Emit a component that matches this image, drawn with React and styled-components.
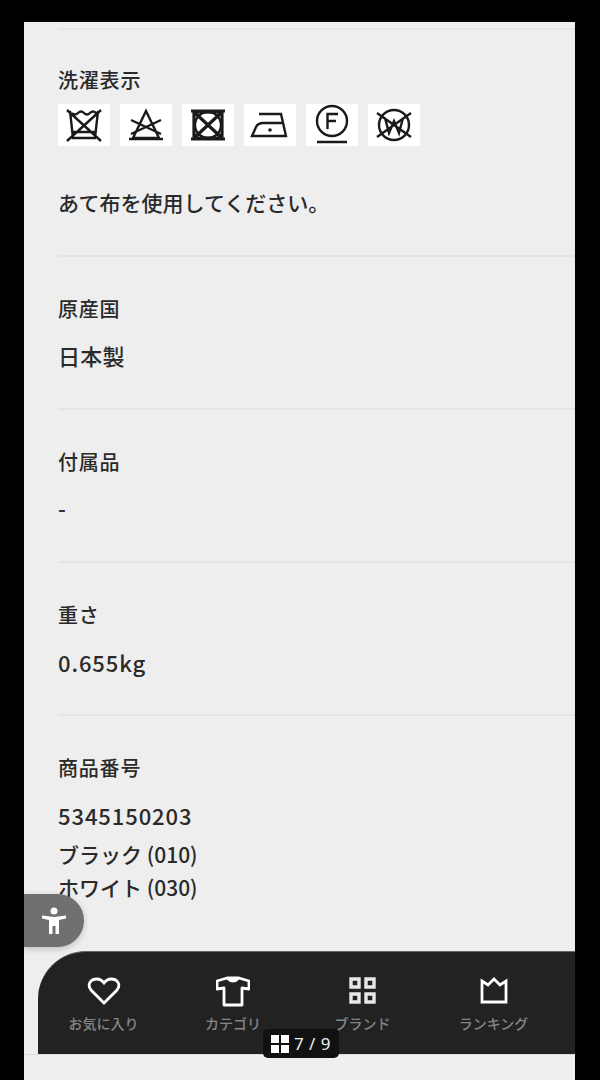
import React from "react";
import styled, { createGlobalStyle } from "styled-components";

const Global = createGlobalStyle`
  html, body { margin: 0; padding: 0; background: #000; }
  * { box-sizing: border-box; }
`;
const Screen = styled.div`
  position: relative; width: 600px; height: 1080px; background: #000; overflow: hidden;
  font-family: "Noto Sans CJK JP", "Noto Sans", sans-serif; color: #222;
`;
const TopBar = styled.div`height: 22px;`;
const Page = styled.main`
  margin: 0 25px 0 24px; height: 1058px; background: #eeeeee; padding: 6px 0 0 34px; overflow: hidden;
`;
const Section = styled.section`
  border-top: 2px solid #e4e4e4;
  padding-top: ${p => p.$top || 37}px;
  height: ${p => p.$h}px;
`;
const Label = styled.div`font-size: 20px; font-weight: 500; line-height: 30px; height: 30px; letter-spacing: .8px; color: #2a2a2a;`;
const Value = styled.div`
  font-size: ${p => p.$size || 22}px; font-weight: 500; line-height: ${p => p.$lh || 34}px;
  margin-top: ${p => p.$mt || 0}px; letter-spacing: ${p => p.$ls ?? 0.3}px; color: #2a2a2a;
`;
const Care = styled.div`display: flex; gap: 10px; margin-top: 9px;`;
const CareBox = styled.div`width: 52px; height: 42px; background: #fff; display: flex; align-items: center; justify-content: center;`;
const Note = styled.div`font-size: 21px; font-weight: 500; line-height: 34px; margin-top: 39px; color: #2a2a2a;`;
const Access = styled.div`
  position: absolute; left: 24px; top: 894px; width: 60px; height: 53px; background: #707070;
  border-radius: 0 27px 27px 0; display: flex; align-items: center; justify-content: center;
  box-shadow: 0 2px 6px rgba(0,0,0,.2);
`;
const Nav = styled.nav`
  position: absolute; left: 38px; top: 951px; width: 537px; height: 103px; background: #222;
  border-top-left-radius: 48px; display: grid; grid-template-columns: 131px 128px 131px 131px; border-top: 1px solid #666;
`;
const NavItem = styled.div`
  display: flex; flex-direction: column; align-items: center; padding-top: 23px; color: #858585; font-size: 14px; font-weight: 500; line-height: 20px;
  svg { height: 32px; margin-bottom: 6px; }
`;
const NavFooter = styled.div`
  position: absolute; left: 24px; top: 1054px; width: 551px; height: 26px; background: #efefef; border-top: 1px solid #ddd;
`;
const Pager = styled.div`
  position: absolute; left: 263px; top: 1029px; width: 76px; height: 29px; background: #111; border-radius: 5px; color: #eee;
  display: flex; align-items: center; justify-content: center; gap: 5px; font-family: "Noto Sans", sans-serif; font-size: 17px; letter-spacing: .5px;
`;

const S = { fill: "none", stroke: "#1a1a1a", strokeWidth: 2.4 };
const icons = [
  <svg width="40" height="36" viewBox="0 0 40 36" {...S}><path d="M6 4 9 31H31L34 4M3 3 37 34M37 3 3 34M8 6q3 3 6 0t6 0 6 0 6 0M9 25H31"/></svg>,
  <svg width="40" height="36" viewBox="0 0 40 36" {...S}><path d="M20 4 33 31H7ZM5 13 35 27M35 13 5 27M3 32H37"/></svg>,
  <svg width="40" height="36" viewBox="0 0 40 36" {...S}><path strokeWidth="3.200" d="M6 5H34V31H6ZM3 4H37M3 32H37M6 5 34 31M34 5 6 31"/><circle cx="20" cy="18" r="13"/></svg>,
  <svg width="40" height="36" viewBox="0 0 40 36" {...S}><path d="M9 7H31L36 29H2L6 20Q8 16 13 16H33"/><circle cx="20" cy="23" r="1.800" fill="#1a1a1a" stroke="none"/></svg>,
  <svg width="40" height="42" viewBox="0 0 40 42" {...S}><circle cx="20" cy="17" r="15"/><path d="M15.500 25V10H26M15.500 17H24M5 38H35"/></svg>,
  <svg width="40" height="36" viewBox="0 0 40 36" {...S}><circle cx="20" cy="18" r="15"/><path d="M3 6 37 30M37 6 3 30M11 11 15 26 20 14 25 26 29 11"/></svg>,
];
const W = { fill: "none", stroke: "#fff", strokeWidth: 2.8 };

export default function App() {
  return (
    <Screen>
      <Global />
      <TopBar />
      <Page>
        <Section $top={35} $h={227}>
          <Label>洗濯表示</Label>
          <Care>{icons.map((ic, i) => <CareBox key={i}>{ic}</CareBox>)}</Care>
          <Note>あて布を使用してください。</Note>
        </Section>
        <Section $h={153}><Label>原産国</Label><Value $mt={14}>日本製</Value></Section>
        <Section $h={153}><Label>付属品</Label><Value $mt={13}>-</Value></Section>
        <Section $h={153}><Label>重さ</Label><Value $mt={15} $ls={0.9}>0.655kg</Value></Section>
        <Section $h={240}>
          <Label>商品番号</Label>
          <Value $mt={15} $ls={0.9}>5345150203</Value>
          <Value $size={21} $ls={0} $mt={6} $lh={33}>ブラック (010)</Value>
          <Value $size={21} $ls={0} $lh={33}>ホワイト (030)</Value>
        </Section>
      </Page>
      <Access>
        <svg width="28" height="30" viewBox="0 0 28 30" fill="#fff"><circle cx="14" cy="5" r="3.500"/><path d="M2 9.500 14 11 26 9.500V12.500L19 14V28H15.500V20H12.500V28H9V14L2 12.500Z"/></svg>
      </Access>
      <Nav>
        <NavItem><svg width="34" height="32" viewBox="0 0 34 32" {...W}><path d="M17 28 4 15C0 10 3 4 10 4q4 0 7 4 3-4 7-4c7 0 10 6 6 11Z"/></svg>お気に入り</NavItem>
        <NavItem><svg width="34" height="32" viewBox="0 0 34 32" {...W}><path d="M11 3H23L33 6V14L26 13V30H8V13L1 14V6ZM11 3Q17 9 23 3" strokeLinejoin="round"/></svg>カテゴリ</NavItem>
        <NavItem><svg width="30" height="32" viewBox="0 0 30 32" strokeWidth="3.400" fill="none" stroke="#e8e8e8"><path d="M3 4H11V12H3ZM18 4H26V12H18ZM3 19H11V27H3ZM18 19H26V27H18Z"/></svg>ブランド</NavItem>
        <NavItem><svg width="28" height="32" viewBox="0 0 28 32" {...W}><path d="M2 6 8 10 14 4 20 10 26 6V27H2Z"/></svg>ランキング</NavItem>
      </Nav>
      <NavFooter />
      <Pager>
        <svg width="18" height="18" viewBox="0 0 18 18" fill="#fff"><path d="M0 0H8V8H0ZM10 0H18V8H10ZM0 10H8V18H0ZM10 10H18V18H10Z"/></svg>
        7 / 9
      </Pager>
    </Screen>
  );
}
